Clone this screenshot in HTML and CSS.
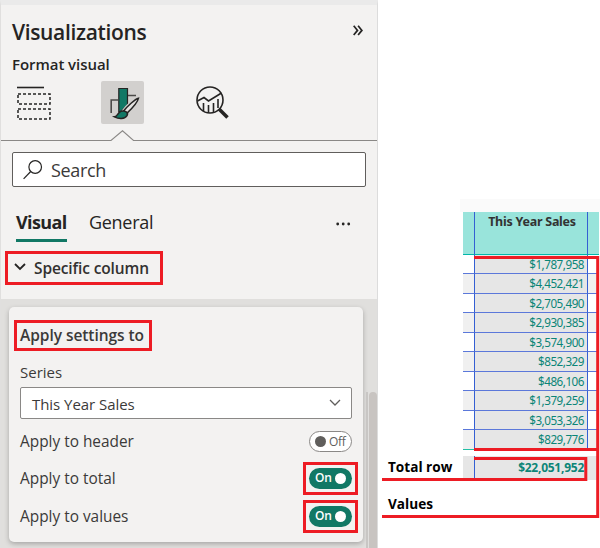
FILE: index.html
```html
<!DOCTYPE html>
<html lang="en">
<head>
<meta charset="utf-8">
<title>Visualizations</title>
<link rel="stylesheet" href="styles.css">
</head>
<body>
<div class="page">
  <section class="panel">
    <header class="panel-head">
      <h1>Visualizations</h1>
      <svg class="collapse" width="10" height="11" viewBox="0 0 10 11"><path d="M0.7 0.8 4.5 5.4 0.7 10M5.1 0.8 8.9 5.4 5.1 10"/></svg>
    </header>
    <h2>Format visual</h2>
    <nav class="modes">
      <svg class="build" width="34" height="34" viewBox="0 0 34 34"><path d="M0 1.5H27" stroke-width="1.6"/><path d="M1 8H33V18H1ZM1 23H33V33H1Z" stroke-width="1.5" stroke-dasharray="3 2"/></svg>
      <span class="format"><svg width="43" height="43" viewBox="0 0 43 43"><path d="M10.2 32V19H17M27 14.5H35" stroke="#4b4a48" stroke-width="1.6" fill="none"/><path d="M17.8 7.5H26.5V24L20 30.5H17.8Z" fill="#117865" stroke="#252423" stroke-width="1.2"/><path d="M37.5 17.2C34 18 26 25.5 22.8 29.8L25.8 32.4C30 28.5 36.7 21 37.5 17.2Z" fill="#d2d0ce" stroke="#d2d0ce" stroke-width="3.6"/><path d="M37.5 17.2C34 18 26 25.5 22.8 29.8L25.8 32.4C30 28.5 36.7 21 37.5 17.2Z" fill="#e4e2e0" stroke="#252423" stroke-width="1.5"/><path d="M13.5 35.8C17 35.5 16.5 31.3 20 30.2C24 29.2 27.8 31.5 26 34.6C23.8 38.3 17.5 38 13.5 35.8Z" fill="#117865" stroke="#252423" stroke-width="1.5"/></svg></span>
      <svg class="analytics" width="34" height="34" viewBox="0 0 34 34"><circle cx="14" cy="14" r="13"/><path d="M1.5 15 8 11.5 12.5 15 25.5 7M7.5 17V25M12.5 19V27M17.5 17V26M22 13V22" /><path d="M23 23 31.5 31.5" stroke-width="3.5"/></svg>
    </nav>
    <svg class="divider" width="376" height="13" viewBox="0 0 376 13"><path d="M0 10.5H110L121.5 .8 132.5 10.5H376"/></svg>
    <div class="search">
      <svg width="20" height="20" viewBox="0 0 20 20"><circle cx="12.2" cy="7" r="6.3"/><path d="M7.7 11.5 .6 18.8"/></svg>
      <span>Search</span>
    </div>
    <div class="tabs">
      <span class="tab selected">Visual</span>
      <span class="tab general">General</span>
      <svg class="more" width="15" height="4" viewBox="0 0 15 4"><circle cx="1.7" cy="2" r="1.4"/><circle cx="7.2" cy="2" r="1.4"/><circle cx="12.7" cy="2" r="1.4"/></svg>
    </div>
    <div class="section-name">
      <svg width="12" height="8" viewBox="0 0 12 8"><path d="M1 1 6 6 11 1"/></svg>
      <span>Specific column</span>
    </div>
    <div class="tray">
      <div class="card">
        <h3>Apply settings to</h3>
        <div class="series-label">Series</div>
        <div class="select"><span>This Year Sales</span><svg width="12" height="8" viewBox="0 0 12 8"><path d="M1 1 6 6 11 1"/></svg></div>
        <div class="setting header-row"><span>Apply to header</span><span class="toggle off"><i></i><b>Off</b></span></div>
        <div class="setting"><span>Apply to total</span><span class="marked"><span class="toggle on"><b>On</b><i></i></span></span></div>
        <div class="setting"><span>Apply to values</span><span class="marked"><span class="toggle on"><b>On</b><i></i></span></span></div>
      </div>
      <div class="scroll"><span class="inner"></span><span class="outer"></span></div>
    </div>
  </section>

  <section class="report">
    <div class="strip"></div>
    <div class="table">
      <div class="row head"><span></span><span>This Year Sales</span><span></span></div>
      <div class="row"><span></span><span>$1,787,958</span><span></span></div>
      <div class="row"><span></span><span>$4,452,421</span><span></span></div>
      <div class="row"><span></span><span>$2,705,490</span><span></span></div>
      <div class="row"><span></span><span>$2,930,385</span><span></span></div>
      <div class="row"><span></span><span>$3,574,900</span><span></span></div>
      <div class="row"><span></span><span>$852,329</span><span></span></div>
      <div class="row"><span></span><span>$486,106</span><span></span></div>
      <div class="row"><span></span><span>$1,379,259</span><span></span></div>
      <div class="row"><span></span><span>$3,053,326</span><span></span></div>
      <div class="row last"><span></span><span>$829,776</span><span></span></div>
    </div>
    <div class="total-line">
      <strong class="note">Total row</strong>
      <div class="row total"><span></span><span>$22,051,952</span><span></span></div>
    </div>
    <strong class="note values">Values</strong>
    <svg class="callouts" width="218" height="264" viewBox="0 0 218 264"><path d="M92 2.5H215.7V261.5H0M92 194.5H215.7M92 203.5H203.8V224.5H0"/></svg>
  </section>
</div>
</body>
</html>
```
FILE: styles.css
```css
* { box-sizing: border-box; }
body { margin: 0; background: #fff; color: #252423; font-family: "Open Sans", "Noto Sans", sans-serif; }
.page { display: flex; width: 600px; height: 548px; overflow: hidden; }
svg { display: block; fill: none; stroke: #252423; flex: none; }
h1, h2, h3 { margin: 0; font-weight: 600; white-space: nowrap; }
span, strong { white-space: nowrap; }

.panel { width: 378px; height: 548px; background: #f3f2f1; border-top: 5px solid #eaeaea; border-left: 1px solid #e0dfde; border-right: 1px solid #dcdcdc; display: flex; flex-direction: column; flex: none; }
.panel-head { height: 48px; padding: 0 14px 0 11px; display: flex; align-items: center; justify-content: space-between; flex: none; }
h1 { font-size: 21px; line-height: 30px; letter-spacing: -.35px; margin-top: 4px; }
.collapse { stroke-width: 1.7; margin-top: 3px; }
h2 { font-size: 15px; line-height: 22px; height: 28px; padding-left: 11px; flex: none; letter-spacing: -.05px; margin: 0; }
.panel-head h1 { margin-top: 5px; }
.modes { display: flex; align-items: center; height: 43px; padding-left: 16px; flex: none; }
.format { width: 43px; height: 43px; background: #d2d0ce; border-radius: 2px; margin-left: 50px; }
.analytics { margin-left: 52px; stroke-width: 1.6; }
.divider { margin-top: 6px; stroke: #8a8886; stroke-width: 1.1; }
.search { width: 354px; height: 35px; margin: 9px 0 0 11px; background: #fff; border: 1px solid #605e5c; border-radius: 2px; display: flex; align-items: center; padding-left: 10px; gap: 8px; font-size: 18px; letter-spacing: -.35px; color: #3b3a39; flex: none; }
.search svg { stroke-width: 1.2; }
.search span { line-height: 30px; }
.tabs { display: flex; margin: 20px 0 0 15px; height: 35px; flex: none; }
.tab { font-size: 18px; line-height: 31px; height: 35px; letter-spacing: -.3px; }
.selected { width: 51px; font-weight: 700; letter-spacing: -.6px; border-bottom: 3px solid #117865; }
.general { margin-left: 22px; }
.more { margin: 15px 0 0 183px; fill: #252423; stroke: none; }
.section-name { width: 158px; height: 34px; margin: 9px 0 0 4px; border: 3px solid #ed1c24; display: flex; align-items: center; padding-left: 6px; gap: 8px; font-size: 15.5px; letter-spacing: -.12px; font-weight: 600; flex: none; color: #323130; }
.section-name svg { stroke-width: 1.8; margin-top: -3px; }
.tray { background: #e0dfdd; margin-top: 14px; height: 249px; display: flex; padding-left: 8px; flex: none; }
.card { width: 354px; height: 235px; margin-top: 8px; background: #f3f2f1; border-radius: 5px; box-shadow: 0 2px 5px rgba(0,0,0,.25); padding: 13px 0 0 5px; color: #3b3a39; flex: none; }
h3 { width: 138px; height: 31px; border: 3px solid #ed1c24; font-size: 15.5px; line-height: 24px; padding-left: 3px; letter-spacing: -.05px; }
.series-label { font-size: 15px; line-height: 20px; margin: 11px 0 0 6px; }
.select { width: 332px; height: 32px; margin: 5px 0 0 6px; background: #fff; border: 1px solid #8a8886; border-radius: 2px; display: flex; align-items: center; justify-content: space-between; padding: 0 10px 0 11px; font-size: 15px; letter-spacing: -.05px; }
.select span { margin-top: 2px; }
.select svg { stroke: #605e5c; stroke-width: 1.3; }
.setting { display: flex; align-items: center; justify-content: space-between; height: 38px; padding: 0 5px 0 6px; font-size: 15.4px; }
.header-row { padding-right: 11px; height: 35px; margin-top: 5px; }
.marked { width: 55px; height: 33px; border: 3px solid #ed1c24; display: flex; align-items: center; justify-content: center; }
.toggle { width: 43px; height: 21px; border-radius: 11px; display: flex; align-items: center; font-size: 12px; letter-spacing: -.3px; }
.toggle b { font-weight: 400; line-height: 20px; }
.toggle i { width: 11px; height: 11px; border-radius: 50%; }
.off { background: #fff; border: 1px solid #8a8886; color: #605e5c; padding-left: 5px; gap: 3px; }
.off i { background: #605e5c; }
.on { background: #117865; color: #fff; padding-left: 6px; gap: 4px; }
.on b { font-weight: 600; }
.on i { background: #fff; }
.scroll { display: flex; margin-left: 3px; padding-top: 93px; gap: 1px; }
.inner { width: 2px; background: #c8c6c4; }
.outer { width: 8px; background: #c8c4c1; border-radius: 4px 4px 0 0; }

.report { width: 222px; position: relative; padding: 199px 0 0 4px; }
.strip { height: 13px; margin-left: 78px; background: #fafafa; }
.table { margin-left: 81px; width: 136px; }
.row { display: grid; grid-template-columns: 12px 113px 11px; grid-template-rows: 100%; height: 19px; font-family: "Noto Sans", "Open Sans", sans-serif; font-size: 11.7px; line-height: 18px; letter-spacing: -.5px; color: #0b8577; }
.row:nth-child(odd) { height: 20px; }
.row span { border-bottom: 1px solid #5b78da; }
.row span:first-child, .row span:nth-child(2) { border-right: 1px solid #345fd3; }
.row span:nth-child(2) { background: #e6e6e6; text-align: right; padding-right: 3px; }
.row:nth-child(odd) span:not(:nth-child(2)) { background: #f0f0f0; }
.row.head { height: 43px; color: #333; font-weight: 700; font-size: 12.5px; line-height: 19px; letter-spacing: -.25px; }
.row.head span, .row.head span:not(:nth-child(2)) { background: #99e4db; border-bottom: 1px solid #01b8aa; }
.row.head span:nth-child(2) { text-align: center; padding: 0 0 0 2px; }
.row.last span { border-bottom-color: #21bfa5; }
.total-line { display: flex; justify-content: space-between; margin-top: 6px; padding-right: 1px; height: 24px; }
.note { font-family: "Open Sans", sans-serif; font-size: 13.6px; color: #000; line-height: 22px; margin-left: 6px; }
.values { display: block; margin-top: 13px; }
.row.total { width: 136px; height: 24px; font-weight: 700; line-height: 23px; font-size: 12px; letter-spacing: -.25px; }
.row.total span, .row.total span:not(:nth-child(2)) { border-bottom: 0; background: #e6e6e6; }
.row.total span:nth-child(2) { border-right: 0; padding-right: 4px; }
.callouts { position: absolute; left: 4px; top: 255px; stroke: #ed1c24; stroke-width: 3; }
```
